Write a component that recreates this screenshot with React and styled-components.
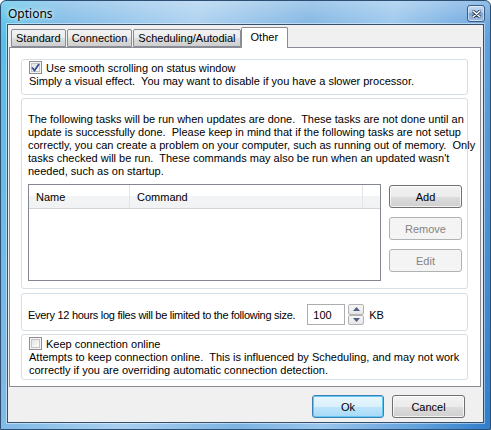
import React from 'react'
import styled, { createGlobalStyle } from 'styled-components'

const Global = createGlobalStyle`
  html, body { margin: 0; padding: 0; background: #fff; }
  body { font-family: "Liberation Sans", Arial, sans-serif; font-size: 11px; color: #000; }
`

const Window = styled.div`
  box-sizing: border-box;
  width: 491px;
  height: 430px;
  padding: 23px 6px 6px 6px;
  position: relative;
  border: 1px solid #2d4f74;
  border-radius: 6px 6px 0 0;
  background:
    linear-gradient(180deg, rgba(255,255,255,0.3) 0px, rgba(255,255,255,0.08) 22px, rgba(255,255,255,0) 40px),
    linear-gradient(100deg, #52c0e8 0%, #7db9e6 12%, #a9cfef 35%, #7cb3e2 55%, #98c5ec 70%, #5f9fdb 88%, #2f7dcc 100%);
`

const TitleBar = styled.div`
  position: absolute;
  left: 7px;
  top: 3px;
  right: 5px;
  height: 18px;
  display: flex;
  align-items: center;
  justify-content: space-between;
`

const Title = styled.span`
  font-family: "Noto Sans", "Open Sans", sans-serif;
  font-size: 12px;
  color: #000;
  text-shadow: 0 0 6px rgba(255,255,255,0.9), 0 0 3px rgba(255,255,255,0.9);
`

const CloseBtn = styled.div`
  box-sizing: border-box;
  width: 18px;
  height: 17px;
  margin-top: 1px;
  border: 1px solid #3a5b84;
  border-radius: 3px;
  background: linear-gradient(180deg, #c6dcf1 0%, #a2c2e6 45%, #7ea4d2 50%, #9dbde4 100%);
  box-shadow: inset 0 0 0 1px rgba(255,255,255,0.5);
  display: flex;
  align-items: center;
  justify-content: center;
`

const Client = styled.div`
  box-sizing: border-box;
  width: 100%;
  height: 100%;
  border: 1px solid #35506c;
  box-shadow: 0 0 0 1px rgba(255,255,255,0.45);
  background: #f0f0f0;
  padding: 2px 2px 0 1px;
  display: flex;
  flex-direction: column;
`

const TabRow = styled.div`
  display: flex;
  align-items: flex-end;
  height: 20px;
  padding-left: 2px;
  gap: 1px;
  position: relative;
  z-index: 1;
`

const Tab = styled.div`
  box-sizing: border-box;
  height: ${p => (p.active ? 21 : 18)}px;
  padding: 0 ${p => (p.active ? 9 : 4)}px;
  margin-bottom: ${p => (p.active ? -1 : 0)}px;
  margin-left: ${p => (p.active ? -1 : 0)}px;
  border: 1px solid #898c95;
  border-bottom: ${p => (p.active ? 'none' : '1px solid #898c95')};
  border-radius: 2px 2px 0 0;
  background: ${p => (p.active ? '#fff' : 'linear-gradient(180deg, #f2f2f2 0%, #ebebeb 50%, #dddddd 51%, #cfcfcf 100%)')};
  display: flex;
  align-items: ${p => (p.active ? 'flex-start' : 'center')};
  padding-top: ${p => (p.active ? 3 : 0)}px;
  white-space: nowrap;
`

const Panel = styled.div`
  box-sizing: border-box;
  height: 340px;
  border: 1px solid #898c95;
  background: #fff;
  padding: 11px 12px 0 11px;
  display: flex;
  flex-direction: column;
`

const Group = styled.div`
  box-sizing: border-box;
  height: ${p => p.h}px;
  margin-bottom: ${p => p.mb || 0}px;
  border: 1px solid #d5dfe5;
  border-radius: 3px;
  box-shadow: inset 0 0 0 1px #fff;
  padding: ${p => p.pad};
`

const CheckRow = styled.label`
  display: flex;
  align-items: center;
  gap: 4px;
  height: 15px;
`

const Box = styled.span`
  box-sizing: border-box;
  width: 13px;
  height: 13px;
  border: 1px solid #8f8f8f;
  background: linear-gradient(135deg, #dcdcdc 0%, #f4f4f4 60%, #fff 100%);
  box-shadow: inset 0 0 0 1px #f4f4f4, inset 0 0 0 2px #c5c5c5;
  display: flex;
  align-items: center;
  justify-content: center;
`

const Text = styled.div`
  line-height: 13px;
  white-space: pre;
`

const TasksBody = styled.div`
  display: flex;
  gap: 8px;
  margin-top: 6px;
`

const List = styled.div`
  box-sizing: border-box;
  width: 353px;
  height: 97px;
  border: 1px solid #828790;
  background: #fff;
`

const Header = styled.div`
  display: flex;
  height: 23px;
  border-bottom: 1px solid #d5d5d5;
  background: linear-gradient(180deg, #ffffff 0%, #ffffff 45%, #f3f4f6 50%, #f1f2f4 100%);
`

const Col = styled.div`
  box-sizing: border-box;
  width: ${p => p.w}px;
  padding-left: 7px;
  display: flex;
  align-items: center;
  border-right: ${p => (p.last ? 'none' : '1px solid #e3e4e6')};
  flex: ${p => (p.last ? 1 : 'none')};
`

const Side = styled.div`
  display: flex;
  flex-direction: column;
  gap: 9px;
  margin-top: 1px;
`

const Button = styled.button`
  box-sizing: border-box;
  width: ${p => p.w || 73}px;
  height: 23px;
  padding: 0;
  font-family: "Liberation Sans", Arial, sans-serif;
  font-size: 11px;
  border-radius: 3px;
  border: 1px solid ${p => (p.disabled ? '#adb2b5' : p.primary ? '#3c7fb1' : '#707070')};
  color: ${p => (p.disabled ? '#838383' : '#000')};
  background: ${p =>
    p.disabled
      ? '#f4f4f4'
      : p.primary
      ? 'linear-gradient(180deg, #eaf6fd 0%, #d9f0fc 50%, #bee6fd 51%, #a7d9f5 100%)'
      : 'linear-gradient(180deg, #f2f2f2 0%, #ebebeb 50%, #dddddd 51%, #cfcfcf 100%)'};
  box-shadow: inset 0 0 0 1px ${p => (p.disabled ? '#f4f4f4' : p.primary ? '#5fc8f5' : 'rgba(255,255,255,0.75)')};
`

const SizeRow = styled.div`
  display: flex;
  align-items: center;
`

const SizeLabel = styled.span`
  letter-spacing: -0.28px;
`

const Input = styled.div`
  box-sizing: border-box;
  width: 38px;
  height: 21px;
  margin-left: 12px;
  border: 1px solid #abadb3;
  padding-left: 5px;
  display: flex;
  align-items: center;
  background: #fff;
`

const Spin = styled.div`
  display: flex;
  flex-direction: column;
  margin-left: 3px;
  width: 16px;
  height: 21px;
`

const SpinBtn = styled.div`
  box-sizing: border-box;
  flex: 1;
  border: 1px solid #b3b3b3;
  border-radius: 2px;
  background: linear-gradient(180deg, #f6f6f6 0%, #e6e6e6 100%);
  display: flex;
  align-items: center;
  justify-content: center;
`

const Unit = styled.span`
  margin-left: 5px;
`

const Footer = styled.div`
  display: flex;
  justify-content: flex-end;
  gap: 8px;
  padding: 8px 16px 0 0;
`

const Check = () => (
  <svg width="9" height="9" viewBox="0 0 9 9">
    <path d="M1 4.5 L3.5 7.5 L8 1" fill="none" stroke="#3a4d8f" strokeWidth="1.8" />
  </svg>
)

const Arrow = ({ up }) => (
  <svg width="7" height="4" viewBox="0 0 7 4">
    <path d={up ? 'M0 4 L3.5 0 L7 4 Z' : 'M0 0 L3.5 4 L7 0 Z'} fill="#4d6185" />
  </svg>
)

const App = () => {
  const tabs = ['Standard', 'Connection', 'Scheduling/Autodial', 'Other']
  return (
    <>
      <Global />
      <Window>
        <TitleBar>
          <Title>Options</Title>
          <CloseBtn>
            <svg width="9" height="8" viewBox="0 0 9 8">
              <path d="M1 1 L8 7 M8 1 L1 7" stroke="#2b3d57" strokeWidth="3.2" strokeLinecap="round" />
              <path d="M1 1 L8 7 M8 1 L1 7" stroke="#fff" strokeWidth="1.6" strokeLinecap="round" />
            </svg>
          </CloseBtn>
        </TitleBar>
        <Client>
          <TabRow>
            {tabs.map(t => (
              <Tab key={t} active={t === 'Other'}>{t}</Tab>
            ))}
          </TabRow>
          <Panel>
            <Group h={36} mb={3} pad="0 6px 0 7px">
              <CheckRow>
                <Box><Check /></Box>
                Use smooth scrolling on status window
              </CheckRow>
              <Text>Simply a visual effect.  You may want to disable if you have a slower processor.</Text>
            </Group>
            <Group h={191} mb={4} pad="14px 5px 0 6px">
              <Text>
                {'The following tasks will be run when updates are done.  These tasks are not done until an\n' +
                  'update is successfully done.  Please keep in mind that if the following tasks are not setup\n' +
                  'correctly, you can create a problem on your computer, such as running out of memory.  Only\n' +
                  'tasks checked will be run.  These commands may also be run when an updated wasn\'t\n' +
                  'needed, such as on startup.'}
              </Text>
              <TasksBody>
                <List>
                  <Header>
                    <Col w={101}>Name</Col>
                    <Col w={233}>Command</Col>
                    <Col last>&nbsp;</Col>
                  </Header>
                </List>
                <Side>
                  <Button>Add</Button>
                  <Button disabled>Remove</Button>
                  <Button disabled>Edit</Button>
                </Side>
              </TasksBody>
            </Group>
            <Group h={38} mb={3} pad="10px 6px 0 6px">
              <SizeRow>
                <SizeLabel>Every 12 hours log files will be limited to the following size.</SizeLabel>
                <Input>100</Input>
                <Spin>
                  <SpinBtn><Arrow up /></SpinBtn>
                  <SpinBtn><Arrow /></SpinBtn>
                </Spin>
                <Unit>KB</Unit>
              </SizeRow>
            </Group>
            <Group h={46} pad="1px 6px 0 7px">
              <CheckRow>
                <Box />
                Keep connection online
              </CheckRow>
              <Text>
                {'Attempts to keep connection online.  This is influenced by Scheduling, and may not work\n' +
                  'correctly if you are overriding automatic connection detection.'}
              </Text>
            </Group>
          </Panel>
          <Footer>
            <Button primary w={72}>Ok</Button>
            <Button w={73}>Cancel</Button>
          </Footer>
        </Client>
      </Window>
    </>
  )
}

export default App
